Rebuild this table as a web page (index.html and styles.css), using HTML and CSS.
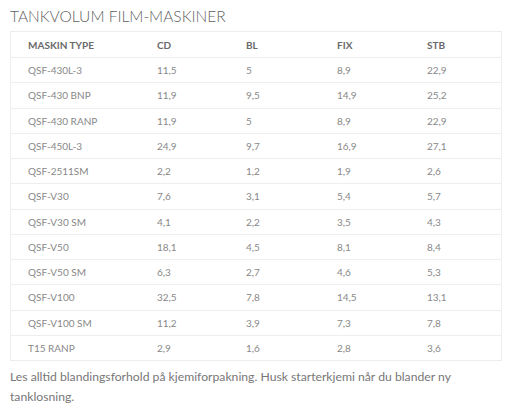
FILE: index.html
```html
<!DOCTYPE html>
<html>
<head>
<meta charset="utf-8">
<link rel="stylesheet" href="styles.css">
</head>
<body>
<h2 class="title">TANKVOLUM FILM-MASKINER</h2>
<table class="tank">
  <thead>
    <tr><th>MASKIN TYPE</th><th>CD</th><th>BL</th><th>FIX</th><th>STB</th></tr>
  </thead>
  <tbody>
    <tr><td>QSF-430L-3</td><td>11,5</td><td>5</td><td>8,9</td><td>22,9</td></tr>
    <tr><td>QSF-430 BNP</td><td>11,9</td><td>9,5</td><td>14,9</td><td>25,2</td></tr>
    <tr><td>QSF-430 RANP</td><td>11,9</td><td>5</td><td>8,9</td><td>22,9</td></tr>
    <tr><td>QSF-450L-3</td><td>24,9</td><td>9,7</td><td>16,9</td><td>27,1</td></tr>
    <tr><td>QSF-2511SM</td><td>2,2</td><td>1,2</td><td>1,9</td><td>2,6</td></tr>
    <tr><td>QSF-V30</td><td>7,6</td><td>3,1</td><td>5,4</td><td>5,7</td></tr>
    <tr><td>QSF-V30 SM</td><td>4,1</td><td>2,2</td><td>3,5</td><td>4,3</td></tr>
    <tr><td>QSF-V50</td><td>18,1</td><td>4,5</td><td>8,1</td><td>8,4</td></tr>
    <tr><td>QSF-V50 SM</td><td>6,3</td><td>2,7</td><td>4,6</td><td>5,3</td></tr>
    <tr><td>QSF-V100</td><td>32,5</td><td>7,8</td><td>14,5</td><td>13,1</td></tr>
    <tr><td>QSF-V100 SM</td><td>11,2</td><td>3,9</td><td>7,3</td><td>7,8</td></tr>
    <tr><td>T15 RANP</td><td>2,9</td><td>1,6</td><td>2,8</td><td>3,6</td></tr>
  </tbody>
</table>
<p class="note">Les alltid blandingsforhold på kjemiforpakning. Husk starterkjemi når du blander ny tanklosning.</p>
</body>
</html>
```
FILE: styles.css
```css
html, body {
  margin: 0;
  padding: 0;
  background: #fff;
}
body {
  padding: 6px 10px 0 10px;
  font-family: Lato, "Open Sans", sans-serif;
  color: #777;
}
.title {
  margin: 0;
  font-weight: 300;
  font-size: 15.5px;
  line-height: 20px;
  color: #5f5f5f;
}
.tank {
  margin-top: 5px;
  width: 492px;
  border-collapse: collapse;
  border: 1px solid #eee;
  font-size: 10px;
  table-layout: fixed;
}
.tank th, .tank td {
  text-align: left;
  padding: 0 0 0 17px;
  height: 24.25px;
  border-bottom: 1px solid #eee;
  line-height: 14px;
}
.tank th {
  font-weight: 700;
  color: #6a6a6a;
  height: 25px;
}
.tank td {
  color: #888;
}
.tank th:nth-child(1) { width: 112px; }
.tank th:nth-child(2) { width: 72px; }
.tank th:nth-child(3) { width: 74px; }
.tank th:nth-child(4) { width: 73px; }
.note {
  margin: 6px 0 0 0;
  font-size: 12.2px;
  line-height: 20px;
  color: #777;
  width: 480px;
}
```
